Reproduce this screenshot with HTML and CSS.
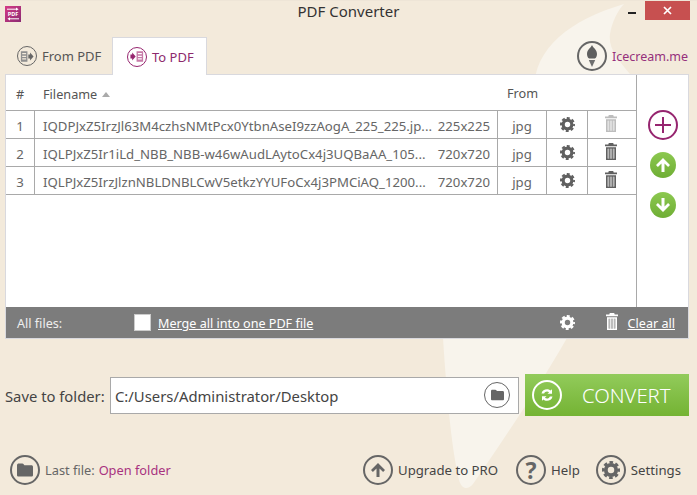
FILE: index.html
```html
<!DOCTYPE html>
<html lang="en">
<head>
<meta charset="utf-8">
<title>PDF Converter</title>
<link rel="stylesheet" href="styles.css">
</head>
<body>
<svg class="defs" width="0" height="0" aria-hidden="true">
  <defs>
    <symbol id="gear" viewBox="0 0 16 16">
      <circle cx="8" cy="8" r="4.6" fill="none" stroke="currentColor" stroke-width="3.4"/>
      <circle cx="8" cy="8" r="6.9" fill="none" stroke="currentColor" stroke-width="2.2" stroke-dasharray="3.2 2.22" stroke-dashoffset="1.6"/>
    </symbol>
    <symbol id="trash" viewBox="0 0 12 17">
      <path fill="currentColor" d="M3.800 0h4.400l.5 1.500H12v1.700H0V1.500h3.300z"/>
      <path fill="currentColor" fill-rule="evenodd" d="M1 4.200h10V17H1zM2.600 5.800v9.600h1.700V5.800zm2.500 0v9.600h1.800V5.800zm2.600 0v9.600h1.700V5.800z"/>
      <path fill="currentColor" opacity=".45" d="M2.600 5.800h6.800v9.600H2.600z"/>
    </symbol>
    <symbol id="folder" viewBox="0 0 16 14">
      <path fill="currentColor" d="M0 2.200C0 1 .8.400 1.800.400h3.400c.8 0 1.200.4 1.600 1l.6.800h7c.9 0 1.600.7 1.600 1.600v8.400c0 .9-.7 1.400-1.600 1.400H1.600C.7 13.600 0 13 0 12.200z"/>
    </symbol>
    <symbol id="arrow-up" viewBox="0 0 14 14">
      <path fill="currentColor" d="M7 0l7 7-1.900 1.900L8.500 5.400V14h-3V5.400L1.900 8.900 0 7z"/>
    </symbol>
  </defs>
</svg>

<svg class="swoosh" viewBox="0 0 697 495" aria-hidden="true">
  <path d="M624 4C570 20 534 48 534 90C500 170 440 250 443 338C447 400 452 450 459 480C462 490 468 490 473 484C510 430 540 385 567 338C600 270 640 170 630 74C618 60 608 48 610 34C612 22 618 10 624 4Z"/>
</svg>

<div class="app">
  <header class="titlebar">
    <svg class="app-logo" viewBox="0 0 16 16" aria-hidden="true">
      <defs>
        <linearGradient id="logo-grad" x1="0" y1="0" x2="1" y2="1">
          <stop offset="0" stop-color="#d63a86"/>
          <stop offset="1" stop-color="#8a2a72"/>
        </linearGradient>
      </defs>
      <rect width="16" height="16" fill="url(#logo-grad)"/>
      <path d="M2 3.200h9.500M4 12.800h10" stroke="#fff" stroke-width="1" fill="none"/>
      <path d="M11 1.600l2.600 1.600L11 4.800zM5 11.200L2.400 12.800 5 14.400z" fill="#fff"/>
      <text x="8" y="10" class="logo-text">PDF</text>
    </svg>
    <h1 class="title">PDF Converter</h1>
    <div class="win-controls">
      <span class="minimize"></span>
      <span class="close">
        <svg viewBox="0 0 9 9" class="close-x" aria-hidden="true"><path d="M1 1l7 7M8 1L1 8" stroke="#fff" stroke-width="1.7"/></svg>
      </span>
    </div>
  </header>

  <nav class="tabs">
    <a class="tab">
      <span class="ring tab-ring">
        <svg viewBox="0 0 16 12" class="tab-glyph" aria-hidden="true">
          <path fill="#8f8f8f" fill-rule="evenodd" d="M1 0h7.500v12H1zM2.500 2v1.500h4.500V2zm0 3v1.500h4.500V5zm0 3v1.500h4.500V8z"/>
          <path fill="#666" d="M9.500 3.800h2V1.500l4 4.500-4 4.500V8.200h-2z"/>
        </svg>
      </span>
      From PDF
    </a>
    <a class="tab tab-active">
      <span class="ring ring-purple tab-ring">
        <svg viewBox="0 0 16 12" class="tab-glyph" aria-hidden="true">
          <path fill="#c77aa8" fill-rule="evenodd" d="M7.500 0H15v12H7.500zM9 2v1.500h4.500V2zm0 3v1.500h4.500V5zm0 3v1.500h4.500V8z"/>
          <path fill="#96256f" d="M.5 3.800h2V1.500l4 4.500-4 4.500V8.200h-2z"/>
        </svg>
      </span>
      To PDF
    </a>
    <a class="brand">
      <span class="ring brand-ring">
        <svg viewBox="0 0 14 22" class="cone" aria-hidden="true">
          <path fill="#5f5f5f" d="M7 0c1 2.800 5 4.500 5 9 0 2.200-1 4-2.200 4.600H4.200C3 13 2 11.200 2 9 2 4.500 6 2.800 7 0z"/>
          <path fill="#6f6f6f" d="M3.800 15h6.400L7 22z"/>
        </svg>
      </span>
      <span class="brand-name">Icecream.me</span>
    </a>
  </nav>

  <main class="panel">
    <div class="list-area">
      <div class="list">
        <div class="row row-head">
          <span class="col-num">#</span>
          <span class="col-name">Filename<i class="sort-arrow"></i></span>
          <span class="col-from">From</span>
        </div>
        <div class="rows">
          <div class="row row-file">
            <span class="cell col-num">1</span>
            <span class="cell col-name col-name-text"><span class="fname">IQDPJxZ5IrzJl63M4czhsNMtPcx0YtbnAseI9zzAogA_225_225.jp...</span><span class="dims">225x225</span></span>
            <span class="cell col-type">jpg</span>
            <span class="cell col-gear"><svg class="icon-gear"><use href="#gear"/></svg></span>
            <span class="cell col-trash"><svg class="icon-trash is-disabled"><use href="#trash"/></svg></span>
          </div>
          <div class="row row-file">
            <span class="cell col-num">2</span>
            <span class="cell col-name col-name-text"><span class="fname">IQLPJxZ5Ir1iLd_NBB_NBB-w46wAudLAytoCx4j3UQBaAA_105...</span><span class="dims">720x720</span></span>
            <span class="cell col-type">jpg</span>
            <span class="cell col-gear"><svg class="icon-gear"><use href="#gear"/></svg></span>
            <span class="cell col-trash"><svg class="icon-trash"><use href="#trash"/></svg></span>
          </div>
          <div class="row row-file">
            <span class="cell col-num">3</span>
            <span class="cell col-name col-name-text"><span class="fname">IQLPJxZ5IrzJlznNBLDNBLCwV5etkzYYUFoCx4j3PMCiAQ_1200...</span><span class="dims">720x720</span></span>
            <span class="cell col-type">jpg</span>
            <span class="cell col-gear"><svg class="icon-gear"><use href="#gear"/></svg></span>
            <span class="cell col-trash"><svg class="icon-trash"><use href="#trash"/></svg></span>
          </div>
        </div>
      </div>
      <aside class="side-actions">
        <span class="add-btn">
          <svg viewBox="0 0 16 16" class="add-plus" aria-hidden="true"><path d="M8 0v16M0 8h16" stroke="#96256f" stroke-width="2"/></svg>
        </span>
        <span class="move-btn"><svg class="move-arrow"><use href="#arrow-up"/></svg></span>
        <span class="move-btn move-down"><svg class="move-arrow"><use href="#arrow-up"/></svg></span>
      </aside>
    </div>
    <footer class="all-files">
      <span class="all-label">All files:</span>
      <span class="checkbox"></span>
      <a class="merge">Merge all into one PDF file</a>
      <svg class="all-gear"><use href="#gear"/></svg>
      <svg class="all-trash"><use href="#trash"/></svg>
      <a class="clear">Clear all</a>
    </footer>
  </main>

  <section class="save-row">
    <label class="save-label">Save to folder:</label>
    <div class="path-box">
      <span class="path-text">C:/Users/Administrator/Desktop</span>
      <span class="ring path-ring"><svg class="folder-small"><use href="#folder"/></svg></span>
    </div>
    <button class="convert" type="button">
      <span class="convert-ring">
        <svg viewBox="0 0 16 16" class="convert-glyph" aria-hidden="true">
          <path fill="#fff" d="M2.500 6.500C3 3.500 5.500 2.200 8 2.200c1.600 0 2.800.6 3.600 1.400L13 2.200v4.600H8.500l1.600-1.600C9.500 4.700 8.800 4.400 8 4.400c-1.300 0-2.500.8-2.900 2.100zM13.500 9.500c-.5 3-3 4.300-5.500 4.300-1.600 0-2.800-.6-3.600-1.400L3 13.800V9.200h4.500l-1.600 1.600c.6.500 1.300.8 2.100.8 1.300 0 2.500-.8 2.900-2.100z"/>
        </svg>
      </span>
      <span class="convert-text">CONVERT</span>
    </button>
  </section>

  <footer class="bottom">
    <span class="ring bottom-ring"><svg class="folder-big"><use href="#folder"/></svg></span>
    <span class="last-file">Last file:</span>
    <a class="open-folder">Open folder</a>
    <a class="bottom-link link-upgrade"><span class="ring bottom-ring"><svg class="up-glyph"><use href="#arrow-up"/></svg></span>Upgrade to PRO</a>
    <a class="bottom-link link-help"><span class="ring bottom-ring help-mark">?</span>Help</a>
    <a class="bottom-link link-settings"><span class="ring bottom-ring"><svg class="settings-glyph"><use href="#gear"/></svg></span>Settings</a>
  </footer>
</div>
</body>
</html>
```
FILE: styles.css
```css
* { box-sizing: border-box; }
html, body { margin: 0; height: 100%; }
body {
  position: relative;
  width: 697px;
  height: 495px;
  overflow: hidden;
  background: #f3eadb;
  font-family: "Noto Sans", "Open Sans", sans-serif;
  font-size: 13px;
  color: #444;
}
.defs { position: absolute; }
.swoosh {
  position: absolute;
  inset: 0;
  width: 697px;
  height: 495px;
  fill: #f8f4ec;
}
.app {
  position: relative;
  display: flex;
  flex-direction: column;
  height: 495px;
  border-top: 1px solid #eee5d7;
}
.titlebar {
  display: flex;
  align-items: flex-start;
  height: 36px;
  padding-left: 5px;
  position: relative;
}
.app-logo { width: 16px; height: 16px; margin-top: 5px; }
.logo-text { font-size: 5.500px; font-weight: 700; fill: #fff; text-anchor: middle; }
.title {
  position: absolute;
  left: 0;
  right: 0;
  top: 0;
  margin: 0;
  text-align: center;
  font-size: 15px;
  line-height: 21px;
  font-weight: 400;
  color: #333;
}
.win-controls { margin-left: auto; display: flex; padding-right: 7px; }
.minimize {
  width: 8px;
  height: 2px;
  margin: 11px 9px 0 0;
  background: #222;
}
.close {
  width: 45px;
  height: 19px;
  background: #c75050;
  display: flex;
  align-items: center;
  justify-content: center;
}
.close-x { width: 9px; height: 9px; }

.tabs {
  display: flex;
  align-items: center;
  height: 38px;
  padding-left: 5px;
  position: relative;
  margin-bottom: -1px;
  z-index: 1;
}
.ring {
  display: inline-flex;
  align-items: center;
  justify-content: center;
  flex: none;
  border: 1.500px solid #666;
  border-radius: 50%;
  color: #666;
}
.ring-purple { border-color: #96256f; }
.tab {
  display: flex;
  align-items: center;
  gap: 5px;
  width: 107px;
  height: 38px;
  padding: 0 0 0 12px;
  font-size: 13px;
  line-height: 20px;
  color: #555;
}
.tab-active {
  width: 95px;
  padding-left: 14px;
  background: #fff;
  border: 1px solid #d9d9de;
  border-bottom: 0;
  color: #8d2a6d;
}
.tab-ring { width: 20px; height: 20px; }
.tab-glyph { width: 14px; height: 11px; }
.brand { margin-left: auto; display: flex; align-items: center; gap: 5px; padding-right: 9px; }
.brand-ring { width: 30px; height: 30px; border-width: 2px; }
.cone { width: 14px; height: 22px; }
.brand-name { color: #96307c; font-size: 12.500px; }

.panel {
  margin: 0 8px 0 5px;
  height: 265px;
  border: 1px solid #d9d9de;
  background: #fff;
  display: flex;
  flex-direction: column;
}
.list-area { flex: 1; display: flex; min-height: 0; }
.list { width: 631px; border-right: 1px solid #a9a9a9; }
.row { display: flex; align-items: center; }
.row-head { height: 35px; padding-top: 3px; color: #555; font-size: 12.700px; }
.col-num { width: 29px; flex: none; text-align: center; }
.row-head .col-num { padding-right: 1px; }
.col-name { width: 463px; flex: none; padding-left: 8px; }
.row-head .col-name { padding-left: 8px; }
.col-from { margin-left: 9px; margin-top: -2px; }
.sort-arrow {
  display: inline-block;
  margin: 0 0 3px 5px;
  vertical-align: middle;
  border-left: 4px solid transparent;
  border-right: 4px solid transparent;
  border-bottom: 5px solid #aaa;
}
.rows { border-top: 1px solid #a9a9a9; }
.row-file { height: 28px; border-bottom: 1px solid #a9a9a9; font-size: 13.200px; color: #666; }
.cell { display: flex; align-items: center; justify-content: center; height: 100%; border-right: 1px solid #a9a9a9; }
.col-num.cell, .col-name-text, .col-type { padding-top: 2px; }
.col-name-text { justify-content: space-between; padding-right: 7px; padding-left: 8px; white-space: nowrap; overflow: hidden; }
.fname { flex: none; width: 393px; overflow: hidden; }
.dims { flex: none; }
.col-type { width: 49px; flex: none; }
.col-gear { width: 41px; flex: none; }
.col-trash { width: 49px; flex: none; border-right: 0; padding-right: 3px; }
.icon-gear { width: 15px; height: 15px; color: #606060; }
.icon-trash { width: 12px; height: 17px; margin-top: -2px; color: #606060; }
.is-disabled { color: #bdbdbd; }

.side-actions {
  flex: 1;
  display: flex;
  flex-direction: column;
  align-items: center;
  padding: 35px 0 0;
  gap: 10px;
}
.add-btn {
  width: 30px;
  height: 30px;
  border: 2px solid #96256f;
  border-radius: 50%;
  display: flex;
  align-items: center;
  justify-content: center;
  margin-bottom: 2px;
}
.add-plus { width: 16px; height: 16px; }
.move-btn {
  width: 26px;
  height: 26px;
  border-radius: 50%;
  background: linear-gradient(#8cc850, #6fae35);
  color: #fff;
  display: flex;
  align-items: center;
  justify-content: center;
}
.move-down { margin-top: 4px; }
.move-down .move-arrow { transform: rotate(180deg); }
.move-arrow { width: 14px; height: 14px; }

.all-files {
  height: 31px;
  flex: none;
  background: #7c7c7c;
  color: #fff;
  display: flex;
  align-items: center;
  font-size: 12.600px;
  padding-left: 11px;
}
.all-label, .merge, .clear { padding-top: 2px; }
.all-label { width: 117px; color: #eee; }
.checkbox {
  width: 17px;
  height: 17px;
  background: #fff;
  border: 1px solid #ccc;
  margin-right: 7px;
}
.merge { text-decoration: underline; color: #fff; }
.all-gear { width: 15px; height: 15px; margin-left: auto; margin-right: 2px; color: #fff; }
.all-trash { width: 12px; height: 17px; margin-left: 29px; margin-top: -2px; color: #fff; }
.clear { margin: 0 13px 0 10px; text-decoration: underline; color: #fff; }

.save-row {
  display: flex;
  align-items: center;
  margin: 35px 8px 0 5px;
  height: 42px;
}
.save-label { width: 105px; flex: none; font-size: 14.800px; padding-top: 2px; color: #444; }
.path-box {
  width: 409px;
  height: 37px;
  flex: none;
  background: #fff;
  border: 1px solid #a9a9a9;
  display: flex;
  align-items: center;
  padding: 0 8px 0 4px;
}
.path-text { font-size: 14.830px; padding-top: 2px; color: #444; }
.path-ring { margin-left: auto; width: 26px; height: 26px; }
.folder-small { width: 13px; height: 12px; }
.convert {
  width: 164px;
  height: 42px;
  margin-left: 6px;
  padding: 0 0 0 7px;
  border: 0;
  background: linear-gradient(#92cb5b, #74b333);
  display: flex;
  align-items: center;
  font-family: inherit;
  color: #fff;
}
.convert-ring {
  width: 30px;
  height: 30px;
  border: 2px solid #fff;
  border-radius: 50%;
  display: flex;
  align-items: center;
  justify-content: center;
}
.convert-glyph { width: 16px; height: 16px; }
.convert-text { margin-left: 20px; font-size: 20.300px; font-weight: 300; }

.bottom {
  display: flex;
  align-items: center;
  margin-top: 39px;
  padding-left: 10px;
  height: 30px;
  font-size: 13.200px;
  color: #555;
}
.bottom-ring { width: 30px; height: 30px; border-width: 2px; }
.last-file { margin-left: 5px; font-size: 12.800px; color: #666; }
.open-folder { margin-left: 4px; font-size: 12.800px; color: #a8327f; }
.bottom-link { display: flex; align-items: center; gap: 5px; color: #444; }
.link-upgrade { margin-left: auto; }
.link-help { margin-left: 18px; }
.link-settings { margin-left: 16px; margin-right: 16px; }
.folder-big { width: 16px; height: 14px; }
.up-glyph { width: 14px; height: 14px; }
.help-mark { font-size: 23px; font-weight: 700; color: #666; line-height: 1; }
.settings-glyph { width: 18px; height: 18px; }
```
